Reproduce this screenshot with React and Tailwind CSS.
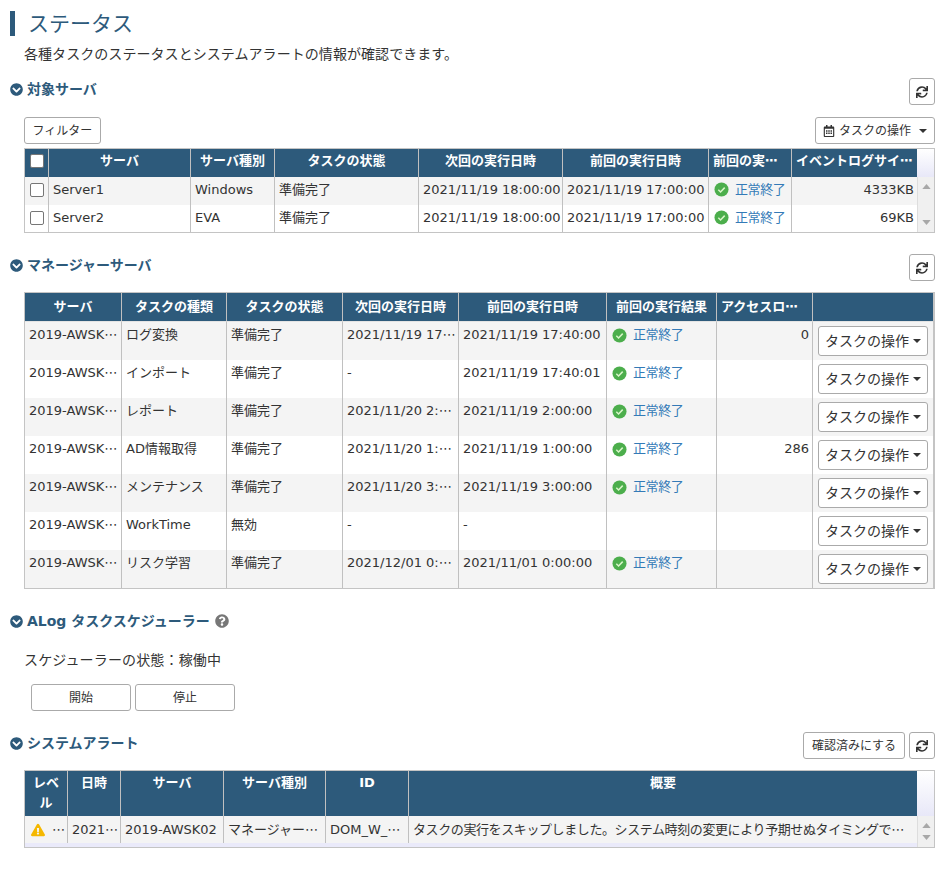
import { FaChevronCircleDown, FaExclamationTriangle, FaQuestionCircle, FaRegCalendarAlt, FaSync } from "react-icons/fa"

const serverRows = [
  ["Server1", "Windows", "準備完了", "2021/11/19 18:00:00", "2021/11/19 17:00:00", "4333KB"],
  ["Server2", "EVA", "準備完了", "2021/11/19 18:00:00", "2021/11/19 17:00:00", "69KB"],
]

const managerRows = [
  ["2019-AWSK⋯", "ログ変換", "準備完了", "2021/11/19 17⋯", "2021/11/19 17:40:00", true, "0"],
  ["2019-AWSK⋯", "インポート", "準備完了", "-", "2021/11/19 17:40:01", true, ""],
  ["2019-AWSK⋯", "レポート", "準備完了", "2021/11/20 2:⋯", "2021/11/19 2:00:00", true, ""],
  ["2019-AWSK⋯", "AD情報取得", "準備完了", "2021/11/20 1:⋯", "2021/11/19 1:00:00", true, "286"],
  ["2019-AWSK⋯", "メンテナンス", "準備完了", "2021/11/20 3:⋯", "2021/11/19 3:00:00", true, ""],
  ["2019-AWSK⋯", "WorkTime", "無効", "-", "-", false, ""],
  ["2019-AWSK⋯", "リスク学習", "準備完了", "2021/12/01 0:⋯", "2021/11/01 0:00:00", true, ""],
]

function CheckIcon() {
  return (
    <svg viewBox="0 0 16 16" className="h-[15px] w-[15px] shrink-0">
      <circle cx="8" cy="8" r="7.5" fill="#4cae4c" />
      <path d="M4.6 8.2l2.4 2.4 4.4-4.6" fill="none" stroke="#d8f5c8" strokeWidth="1.6" />
    </svg>
  )
}

function Result() {
  return (
    <div className="flex items-start gap-[6px] pl-[1px] text-[#337ab7]">
      <span className="pt-[2px]"><CheckIcon /></span>
      <span className="tracking-[-0.4px]">正常終了</span>
    </div>
  )
}

function Btn({ className = "", children }) {
  return (
    <button className={"flex h-[27px] items-center justify-center rounded-[3px] border border-[#aaaaaa] bg-white text-xs text-[#333333] " + className}>
      {children}
    </button>
  )
}

function RefreshBtn() {
  return (
    <Btn className="w-[26px]">
      <FaSync className="text-[12px] text-[#333333]" />
    </Btn>
  )
}

function Heading({ children }) {
  return (
    <h2 className="flex h-[22px] items-center gap-[4px] text-sm leading-5 font-bold text-[#2d5a7b]">
      <FaChevronCircleDown className="w-[13px] text-[13px]" />
      {children}
    </h2>
  )
}

function Caret() {
  return <span className="ml-[4px] h-0 w-0 border-x-[4px] border-t-[4px] border-x-transparent border-t-[#333333]" />
}

function Arrow({ up }) {
  return (
    <svg viewBox="0 0 10 6" className="h-[5px] w-[9px]">
      <path d={up ? "M5 0l5 6H0z" : "M5 6l5-6H0z"} fill="#a8a8a8" />
    </svg>
  )
}

function Scrollbar({ head }) {
  return (
    <div className="flex w-[17px] flex-col">
      <div className={head + " bg-gradient-to-b from-white to-[#e8e8f8]"} />
      <div className="flex flex-1 flex-col items-center justify-between border-l border-[#dddddd] bg-[#f0f0f0] py-[7px]">
        <Arrow up />
        <Arrow />
      </div>
    </div>
  )
}

function Th({ children, className = "" }) {
  return (
    <th className={"overflow-hidden border-r border-[#c0c0c0] bg-[#2d5a7b] px-[4px] text-center text-[13px] font-bold whitespace-nowrap text-white " + className}>
      {children}
    </th>
  )
}

function Td({ children, className = "" }) {
  return (
    <td className={"overflow-hidden border-r border-[#c0c0c0] px-[4px] text-[13px] whitespace-nowrap text-[#333333] " + className}>
      {children}
    </td>
  )
}

function Checkbox() {
  return <input type="checkbox" className="mx-auto block h-[14px] w-[14px] appearance-none rounded-[2px] border border-[#767676] bg-white" />
}

export default function App() {
  return (
    <div className="h-[876px] w-[942px] overflow-hidden bg-white pr-[7px] pl-[10px] font-['DejaVu_Sans','Noto_Sans_CJK_JP',sans-serif] text-[#333333]">
      <h1 className="mt-0 flex pt-[11px]">
        <span className="h-[25px] border-l-[5px] border-[#2d5a7b] pl-[13px] text-[21px] leading-[27px] font-normal text-[#2d5a7b]">ステータス</span>
      </h1>
      <p className="mt-[7px] pl-[14px] text-sm leading-[22px] tracking-[0.06px]">各種タスクのステータスとシステムアラートの情報が確認できます。</p>

      {/* 対象サーバ */}
      <div className="mt-[13px] flex items-start justify-between">
        <Heading>対象サーバ</Heading>
        <RefreshBtn />
      </div>
      <div className="mt-[12px] pl-[14px]">
        <div className="flex justify-between">
          <Btn className="w-[77px]">フィルター</Btn>
          <Btn className="w-[120px]">
            <FaRegCalendarAlt className="mr-[4px] text-[12px]" />
            タスクの操作
            <span className="w-[4px]" />
            <Caret />
          </Btn>
        </div>
        <div className="mt-[4px] flex border border-[#c4c4c4]">
          <table className="w-[892px] table-fixed border-separate border-spacing-0">
            <colgroup>
              <col className="w-[24px]" />
              <col className="w-[142px]" />
              <col className="w-[84px]" />
              <col className="w-[144px]" />
              <col className="w-[144px]" />
              <col className="w-[146px]" />
              <col className="w-[83px]" />
              <col className="w-[125px]" />
            </colgroup>
            <thead>
              <tr className="h-[28px]">
                <Th className="px-0 pb-[4px]"><Checkbox /></Th>
                <Th className="pb-[4px]">サーバ</Th>
                <Th className="pb-[4px]">サーバ種別</Th>
                <Th className="pb-[4px]">タスクの状態</Th>
                <Th className="pb-[4px]">次回の実行日時</Th>
                <Th className="pb-[4px]">前回の実行日時</Th>
                <Th className="pb-[4px] text-left">前回の実⋯</Th>
                <Th className="border-r-0 pb-[4px] text-left">イベントログサイ⋯</Th>
              </tr>
            </thead>
            <tbody>
              {serverRows.map((row, i) => (
                <tr key={row[0]} className={i % 2 === 0 ? "h-[28px] bg-[#f4f4f4]" : "h-[27px] bg-white"}>
                  <Td className="px-0 pb-[2px]"><Checkbox /></Td>
                  <Td className="pb-[2px]">{row[0]}</Td>
                  <Td className="pb-[2px]">{row[1]}</Td>
                  <Td className="pb-[2px]">{row[2]}</Td>
                  <Td className="pr-0 pb-[2px]">{row[3]}</Td>
                  <Td className="pr-0 pb-[2px]">{row[4]}</Td>
                  <Td className="pb-[2px]"><Result /></Td>
                  <Td className="border-r-0 pr-[3px] pb-[2px] text-right">{row[5]}</Td>
                </tr>
              ))}
            </tbody>
          </table>
          <Scrollbar head="h-[28px]" />
        </div>
      </div>

      {/* マネージャーサーバ */}
      <div className="mt-[21px] flex items-start justify-between">
        <Heading>マネージャーサーバ</Heading>
        <RefreshBtn />
      </div>
      <div className="mt-[11px] pl-[14px]">
        <div className="border border-r-2 border-[#c4c4c4]">
          <table className="w-[908px] table-fixed border-separate border-spacing-0">
            <colgroup>
              <col className="w-[97px]" />
              <col className="w-[105px]" />
              <col className="w-[116px]" />
              <col className="w-[116px]" />
              <col className="w-[148px]" />
              <col className="w-[110px]" />
              <col className="w-[96px]" />
              <col className="w-[120px]" />
            </colgroup>
            <thead>
              <tr className="h-[29px]">
                <Th className="border-b border-b-[#e4e4e4]">サーバ</Th>
                <Th className="border-b border-b-[#e4e4e4]">タスクの種類</Th>
                <Th className="border-b border-b-[#e4e4e4]">タスクの状態</Th>
                <Th className="border-b border-b-[#e4e4e4]">次回の実行日時</Th>
                <Th className="border-b border-b-[#e4e4e4]">前回の実行日時</Th>
                <Th className="border-b border-b-[#e4e4e4]">前回の実行結果</Th>
                <Th className="border-b border-b-[#e4e4e4] text-left">アクセスロ⋯</Th>
                <Th className="border-r-0 border-b border-b-[#e4e4e4]" />
              </tr>
            </thead>
            <tbody>
              {managerRows.map((row, i) => (
                <tr key={row[1]} className={"h-[38px] " + (i % 2 === 0 ? "bg-[#f4f4f4]" : "bg-white")}>
                  <Td className="pt-[4px] pb-[16px] align-top leading-[18px]">{row[0]}</Td>
                  <Td className="pt-[4px] pb-[16px] align-top leading-[18px]">{row[1]}</Td>
                  <Td className="pt-[4px] pb-[16px] align-top leading-[18px]">{row[2]}</Td>
                  <Td className="pt-[4px] pb-[16px] align-top leading-[18px]">{row[3]}</Td>
                  <Td className="pt-[4px] pb-[16px] align-top leading-[18px]">{row[4]}</Td>
                  <Td className="pt-[4px] pb-[16px] align-top leading-[18px]">{row[5] && <Result />}</Td>
                  <Td className="pt-[4px] pr-[3px] pb-[16px] text-right align-top leading-[18px]">{row[6]}</Td>
                  <td className="px-[5px] align-middle">
                    <button className="flex h-[30px] w-[110px] items-center justify-center rounded-[3px] border border-[#aaaaaa] bg-white text-sm text-[#333333]">
                      タスクの操作
                      <Caret />
                    </button>
                  </td>
                </tr>
              ))}
            </tbody>
          </table>
        </div>
      </div>

      {/* ALog タスクスケジューラー */}
      <div className="mt-[21px] flex items-center gap-[5px]">
        <Heading>ALog タスクスケジューラー</Heading>
        <FaQuestionCircle className="text-sm text-[#777777]" />
      </div>
      <p className="mt-[18px] pl-[14px] text-sm leading-5 tracking-[0.15px]">スケジューラーの状態：稼働中</p>
      <div className="mt-[14px] flex gap-[4px] pl-[21px]">
        <Btn className="w-[100px]">開始</Btn>
        <Btn className="w-[100px]">停止</Btn>
      </div>

      {/* システムアラート */}
      <div className="mt-[21px] flex items-start justify-between">
        <Heading>システムアラート</Heading>
        <div className="flex gap-[4px]">
          <Btn className="w-[102px]">確認済みにする</Btn>
          <RefreshBtn />
        </div>
      </div>
      <div className="mt-[11px] pl-[14px]">
        <div className="flex border border-[#c4c4c4]">
          <div className="w-[892px] bg-[#eaeafa]">
            <table className="w-[892px] table-fixed border-separate border-spacing-0">
              <colgroup>
                <col className="w-[43px]" />
                <col className="w-[53px]" />
                <col className="w-[103px]" />
                <col className="w-[102px]" />
                <col className="w-[83px]" />
                <col className="w-[508px]" />
              </colgroup>
              <thead>
                <tr className="h-[45px]">
                  <th className="border-r border-[#c0c0c0] bg-[#2d5a7b] px-[4px] pt-[2px] align-top text-[13px] leading-5 font-bold text-white">レベル</th>
                  <Th className="pt-[2px] align-top leading-5">日時</Th>
                  <Th className="pt-[2px] align-top leading-5">サーバ</Th>
                  <Th className="pt-[2px] align-top leading-5">サーバ種別</Th>
                  <Th className="pt-[2px] align-top leading-5">ID</Th>
                  <Th className="border-r-0 pt-[2px] align-top leading-5">概要</Th>
                </tr>
              </thead>
              <tbody>
                <tr className="h-[27px] bg-[#f4f4f4]">
                  <Td className="pr-0">
                    <div className="flex items-center gap-[7px] pl-[2px]">
                      <FaExclamationTriangle className="shrink-0 text-sm text-[#f5b800]" />
                      <span>⋯</span>
                    </div>
                  </Td>
                  <Td>2021⋯</Td>
                  <Td>2019-AWSK02</Td>
                  <Td>マネージャー⋯</Td>
                  <Td className="text-[#337ab7]">DOM_W_⋯</Td>
                  <Td className="border-r-0 tracking-[-0.4px]">タスクの実行をスキップしました。システム時刻の変更により予期せぬタイミングで⋯</Td>
                </tr>
              </tbody>
            </table>
            <div className="h-[4px]" />
          </div>
          <Scrollbar head="h-[45px]" />
        </div>
      </div>
    </div>
  )
}
